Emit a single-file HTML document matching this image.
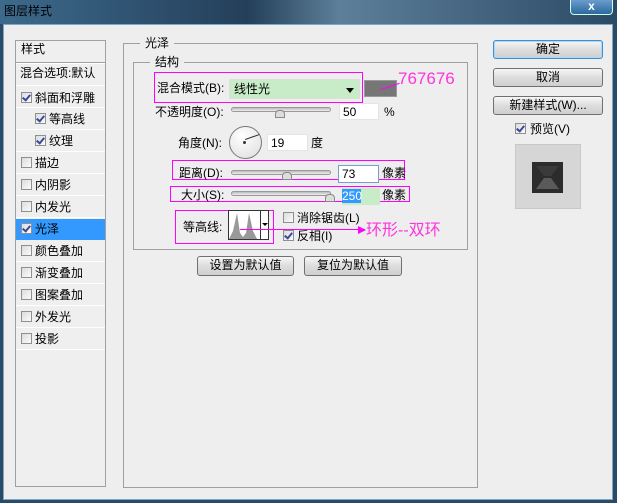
<!DOCTYPE html>
<html><head><meta charset="utf-8"><style>
*{margin:0;padding:0;box-sizing:border-box}
body{width:617px;height:503px;overflow:hidden;position:relative;background:#2a4a66;font-family:"Liberation Sans","Noto Sans CJK SC",sans-serif;font-size:12px;color:#000}
.a{position:absolute}
.t{position:absolute;white-space:nowrap;line-height:14px}
.btn{position:absolute;border:1px solid #707070;border-radius:3px;background:linear-gradient(#f6f6f6,#dddddd 50%,#cfcfcf);text-align:center;line-height:16px}
.cb{position:absolute;width:11px;height:11px;border:1px solid #8e8f8f;background:linear-gradient(135deg,#dcdcdc,#fbfbfb)}
.cb.on::after{content:"";position:absolute;left:2px;top:0px;width:3px;height:6px;border:solid #3a4a9a;border-width:0 2px 2px 0;transform:rotate(40deg)}
.row{position:absolute;left:16px;width:89px;height:22px;border-bottom:1px solid #fff}
.mg{position:absolute;border:1px solid #ff00ff}
.sl{position:absolute;height:5px;border:1px solid #999;border-radius:3px;background:linear-gradient(#bbb,#eee)}
.th{position:absolute;width:0;height:0}
.inp{position:absolute;background:#fff;border:1px solid #e4e4e4;padding-left:3px;line-height:16px}
</style></head><body>
<div class="a" style="left:0;top:0;width:617px;height:24px;background:linear-gradient(90deg,#3d6a8c,#243f5a 40%,#5d7f99 55%,#2b4a66)"></div>
<div class="t" style="left:4px;top:4px;font-size:12px;color:#000">图层样式</div>
<div class="a" style="left:570px;top:0;width:43px;height:15px;border:1px solid #cfe;border-top:none;border-radius:0 0 4px 4px;background:linear-gradient(#6a9ccc,#2c6a9e);color:#fff;text-align:center;font-weight:bold;line-height:13px">x</div>
<div class="a" style="left:3px;top:24px;width:610px;height:476px;background:#eeeeee;border:1px solid #7aa9c8"></div>

<!-- left panel -->
<div class="a" style="left:15px;top:40px;width:91px;height:447px;border:1px solid #a0a0a0;background:#efefef"></div>
<div class="t" style="left:21px;top:42px">样式</div>
<div class="a" style="left:16px;top:62px;width:89px;height:2px;border-top:1px solid #a0a0a0;border-bottom:1px solid #fff"></div>
<div class="t" style="left:20px;top:66px">混合选项:默认</div>
<div class="row" style="top:64px"></div>
<div class="row" style="top:86px"></div><div class="cb on" style="left:21px;top:92px"></div><div class="t" style="left:35px;top:91px">斜面和浮雕</div>
<div class="row" style="top:108px"></div><div class="cb on" style="left:35px;top:113px"></div><div class="t" style="left:49px;top:112px">等高线</div>
<div class="row" style="top:130px"></div><div class="cb on" style="left:35px;top:135px"></div><div class="t" style="left:49px;top:134px">纹理</div>
<div class="row" style="top:152px"></div><div class="cb" style="left:21px;top:157px"></div><div class="t" style="left:35px;top:156px">描边</div>
<div class="row" style="top:174px"></div><div class="cb" style="left:21px;top:179px"></div><div class="t" style="left:35px;top:178px">内阴影</div>
<div class="row" style="top:196px"></div><div class="cb" style="left:21px;top:201px"></div><div class="t" style="left:35px;top:200px">内发光</div>
<div class="a" style="left:16px;top:219px;width:89px;height:21px;background:#3399ff"></div><div class="cb on" style="left:21px;top:223px"></div><div class="t" style="left:35px;top:222px">光泽</div>
<div class="row" style="top:240px"></div><div class="cb" style="left:21px;top:245px"></div><div class="t" style="left:35px;top:244px">颜色叠加</div>
<div class="row" style="top:262px"></div><div class="cb" style="left:21px;top:267px"></div><div class="t" style="left:35px;top:266px">渐变叠加</div>
<div class="row" style="top:284px"></div><div class="cb" style="left:21px;top:289px"></div><div class="t" style="left:35px;top:288px">图案叠加</div>
<div class="row" style="top:306px"></div><div class="cb" style="left:21px;top:311px"></div><div class="t" style="left:35px;top:310px">外发光</div>
<div class="row" style="top:328px"></div><div class="cb" style="left:21px;top:333px"></div><div class="t" style="left:35px;top:332px">投影</div>

<!-- group boxes -->
<div class="a" style="left:123px;top:43px;width:355px;height:445px;border:1px solid #a0a0a0"></div>
<div class="t" style="left:140px;top:36px;background:#eee;padding:0 5px">光泽</div>
<div class="a" style="left:133px;top:62px;width:335px;height:188px;border:1px solid #a0a0a0"></div>
<div class="t" style="left:150px;top:55px;background:#eee;padding:0 5px">结构</div>

<div class="mg" style="left:154px;top:72px;width:209px;height:31px"></div>
<div class="t" style="left:157px;top:81px">混合模式(B):</div>
<div class="a" style="left:229px;top:79px;width:131px;height:20px;background:#c8ecc8;border:1px solid #ddd"></div>
<div class="t" style="left:234px;top:82px">线性光</div>
<div class="a" style="left:346px;top:88px;border:4px solid transparent;border-top:5px solid #000"></div>
<div class="a" style="left:364px;top:80px;width:33px;height:17px;background:#767676;border:1px solid #999"></div>
<div class="t" style="left:398px;top:70px;color:#ff33dd;font-size:17px;line-height:18px">767676</div>
<div class="a" style="left:380px;top:86px;width:20px;height:1px;background:#f0f;transform:rotate(-18deg)"></div>

<div class="t" style="left:155px;top:105px">不透明度(O):</div>
<div class="sl" style="left:231px;top:107px;width:100px"></div>
<div class="a" style="left:275px;top:110px;width:10px;height:8px;background:#ddd;border:1px solid #888;border-radius:4px 4px 0 0"></div>
<div class="inp" style="left:339px;top:103px;width:40px;height:17px">50</div>
<div class="t" style="left:384px;top:105px">%</div>

<div class="t" style="left:178px;top:136px">角度(N):</div>
<div class="a" style="left:229px;top:126px;width:33px;height:33px;border-radius:50%;border:1px solid #777;background:radial-gradient(circle at 40% 30%,#fff,#ddd)"></div>
<div class="a" style="left:243px;top:141px;width:3px;height:3px;border-radius:50%;background:#333"></div>
<div class="a" style="left:245px;top:139px;width:15px;height:1px;background:#333;transform-origin:0 0;transform:rotate(-19deg)"></div>
<div class="inp" style="left:267px;top:134px;width:41px;height:17px">19</div>
<div class="t" style="left:311px;top:136px">度</div>

<div class="mg" style="left:172px;top:160px;width:233px;height:20px"></div>
<div class="t" style="left:179px;top:166px">距离(D):</div>
<div class="sl" style="left:231px;top:170px;width:100px"></div>
<div class="a" style="left:282px;top:172px;width:10px;height:8px;background:#ddd;border:1px solid #888;border-radius:4px 4px 0 0"></div>
<div class="inp" style="left:338px;top:165px;width:41px;height:18px;border:1px solid #7a9cc8">73</div>
<div class="t" style="left:382px;top:166px">像素</div>

<div class="mg" style="left:170px;top:186px;width:240px;height:16px"></div>
<div class="t" style="left:181px;top:188px">大小(S):</div>
<div class="sl" style="left:231px;top:191px;width:100px"></div>
<div class="a" style="left:325px;top:194px;width:10px;height:8px;background:#ddd;border:1px solid #888;border-radius:4px 4px 0 0"></div>
<div class="a" style="left:342px;top:188px;width:38px;height:17px;background:#c8ecc8"></div>
<div class="a" style="left:342px;top:189px;width:19px;height:14px;background:#3399ff;color:#fff;line-height:14px">250</div>
<div class="t" style="left:382px;top:188px">像素</div>

<div class="mg" style="left:175px;top:210px;width:99px;height:34px"></div>
<div class="t" style="left:183px;top:220px">等高线:</div>
<div class="a" style="left:228px;top:210px;width:41px;height:30px;border:1px solid #333;background:#fff"></div>
<svg class="a" style="left:229px;top:211px" width="30" height="28"><path d="M0 28 L4 20 L8 2 L11 22 L14 26 L17 22 L20 2 L24 20 L28 28Z" fill="#999"/></svg>
<div class="a" style="left:260px;top:211px;width:1px;height:28px;background:#333"></div>
<div class="a" style="left:262px;top:223px;border:3px solid transparent;border-top:3px solid #000"></div>
<div class="cb" style="left:283px;top:212px"></div><div class="t" style="left:297px;top:211px">消除锯齿(L)</div>
<div class="cb on" style="left:283px;top:230px"></div><div class="t" style="left:297px;top:229px">反相(I)</div>
<div class="a" style="left:240px;top:229px;width:125px;height:1px;background:#f0f"></div>
<div class="a" style="left:358px;top:226px;border:4px solid transparent;border-left:8px solid #f0f;border-right:0"></div>
<div class="t" style="left:366px;top:222px;color:#ff33dd;font-size:16px;line-height:18px">环形--双环</div>

<div class="btn" style="left:197px;top:256px;width:97px;height:20px">设置为默认值</div>
<div class="btn" style="left:304px;top:256px;width:98px;height:20px">复位为默认值</div>

<!-- right -->
<div class="btn" style="left:493px;top:40px;width:110px;height:19px;border:1px solid #3c8fd8;box-shadow:0 0 0 1px #a8d8f8 inset">确定</div>
<div class="btn" style="left:493px;top:68px;width:110px;height:19px">取消</div>
<div class="btn" style="left:493px;top:96px;width:110px;height:19px">新建样式(W)...</div>
<div class="cb on" style="left:515px;top:123px"></div><div class="t" style="left:530px;top:122px">预览(V)</div>
<div class="a" style="left:515px;top:144px;width:66px;height:65px;background:#d6d6d6;border:1px solid #c8c8c8"></div>
<svg class="a" style="left:532px;top:162px" width="31" height="31"><rect width="31" height="31" fill="#2c2c2c"/><path d="M4 4 L27 4 L19 14 L12 14Z" fill="#3a3a3a"/><path d="M4 27 L12 16 L19 16 L27 27Z" fill="#5a5a5a"/></svg>
</body></html>
